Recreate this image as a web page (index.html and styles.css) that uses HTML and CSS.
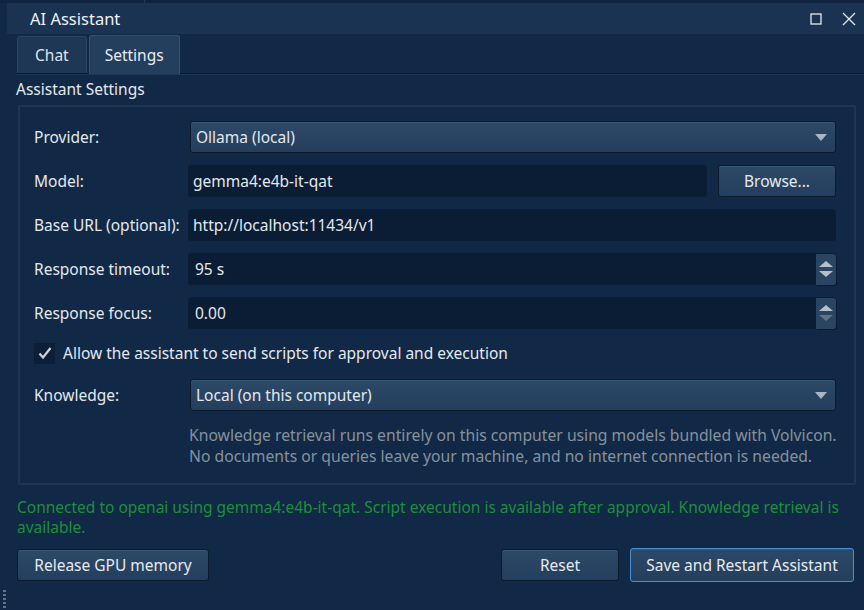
FILE: index.html
```html
<!DOCTYPE html>
<html>
<head>
<meta charset="utf-8">
<link rel="stylesheet" href="styles.css">
</head>
<body>
<div class="app">
  <div class="topstrip"><span class="divider"></span></div>
  <div class="titlebar">
    <span class="title">AI Assistant</span>
    <span class="winbtns">
      <svg class="maxicon" width="12" height="12" viewBox="0 0 12 12"><rect x="1" y="1" width="10" height="10" fill="none" stroke="#e6e9ee" stroke-width="1.3"/></svg>
      <svg class="closeicon" width="14" height="14" viewBox="0 0 14 14"><path d="M1 1 L13 13 M13 1 L1 13" stroke="#e6e9ee" stroke-width="1.3"/></svg>
    </span>
  </div>
  <div class="tabbar">
    <div class="tab">Chat</div>
    <div class="tab active">Settings</div>
  </div>
  <div class="section-title">Assistant Settings</div>
  <div class="group">
    <div class="row">
      <label class="lbl">Provider:</label>
      <div class="combo"><span>Ollama (local)</span><span class="arrow"></span></div>
    </div>
    <div class="row">
      <label class="lbl">Model:</label>
      <div class="field-with-btn">
        <div class="input grow">gemma4:e4b-it-qat</div>
        <div class="btn browse">Browse...</div>
      </div>
    </div>
    <div class="row">
      <label class="lbl">Base URL (optional):</label>
      <div class="input">http://localhost:11434/v1</div>
    </div>
    <div class="row">
      <label class="lbl">Response timeout:</label>
      <div class="spin"><span class="spintext">95 s</span><span class="spinbtns"><span class="up"></span><span class="down"></span></span></div>
    </div>
    <div class="row">
      <label class="lbl">Response focus:</label>
      <div class="spin"><span class="spintext">0.00</span><span class="spinbtns"><span class="up"></span><span class="down dim"></span></span></div>
    </div>
    <div class="checkrow">
      <span class="checkbox"><svg width="16" height="14" viewBox="0 0 16 14"><path d="M2.5 7.5 L6 11.5 L13.5 2" fill="none" stroke="#c9cfd7" stroke-width="2.3"/></svg></span>
      <span>Allow the assistant to send scripts for approval and execution</span>
    </div>
    <div class="row">
      <label class="lbl">Knowledge:</label>
      <div class="combo"><span>Local (on this computer)</span><span class="arrow"></span></div>
    </div>
    <div class="help">Knowledge retrieval runs entirely on this computer using models bundled with Volvicon.<br>No documents or queries leave your machine, and no internet connection is needed.</div>
  </div>
  <div class="status">Connected to openai using gemma4:e4b-it-qat. Script execution is available after approval. Knowledge retrieval is available.</div>
  <div class="actions">
    <div class="btn release">Release GPU memory</div>
    <div class="spacer"></div>
    <div class="btn reset">Reset</div>
    <div class="btn primary">Save and Restart Assistant</div>
  </div>
  <div class="grip"></div>
</div>
</body>
</html>
```
FILE: styles.css
```css
* { box-sizing: border-box; }
html, body { margin: 0; padding: 0; }
body {
  width: 864px;
  height: 610px;
  overflow: hidden;
  background: #112946;
  font-family: "Noto Sans", "Open Sans", sans-serif;
  font-size: 15.5px;
  color: #e4e8ee;
}
.app { position: relative; width: 864px; height: 610px; display: flex; flex-direction: column; }
.topstrip { height: 3px; background: #0e2340; position: relative; flex: none; }
.divider { position: absolute; left: 144px; top: 0; width: 1px; height: 3px; background: #21395a; }
.titlebar {
  flex: none;
  height: 31px;
  margin-left: 7px;
  background: #1b3352;
  display: flex;
  align-items: center;
  padding-left: 23px;
  padding-right: 8px;
}
.title { font-size: 16.5px; color: #eef1f5; flex: 1; }
.winbtns { display: flex; align-items: center; gap: 20px; }
.tabbar {
  flex: none;
  display: flex;
  align-items: flex-end;
  height: 40px;
  border-bottom: 1px solid #0a1b30;
  box-shadow: 0 1px 0 #1d3756;
  margin-left: 16px;
  padding-left: 1px;
}
.tab {
  height: 37px;
  padding: 0 17px;
  display: flex;
  align-items: center;
  background: #1d3755;
  border: 1px solid #2b4563;
  border-bottom: none;
  border-radius: 3px 3px 0 0;
  margin-right: 2px;
  color: #dfe4ea;
}
.tab.active {
  height: 39px;
  margin-bottom: -1px;
  padding: 0 15px;
  background: #243e5d;
  border-color: #355170;
  color: #e8ecf1;
}
.section-title { flex: none; padding: 4px 0 0 16px; height: 31px; color: #e4e8ee; }
.group {
  flex: none;
  margin: 0 8px 0 18px;
  border: 2px solid #1d3654;
  border-radius: 2px;
  height: 380px;
  padding: 14px 18px 0 14px;
  display: flex;
  flex-direction: column;
}
.row { flex: none; display: flex; align-items: center; height: 32px; margin-bottom: 12px; }
.lbl { width: 154px; flex: none; color: #e4e8ee; }
.combo {
  flex: 1;
  height: 32px;
  margin-left: 2px;
  border: 1px solid #0b1a2d;
  border-radius: 3px;
  background: linear-gradient(#2d4968, #243f5d);
  box-shadow: inset 0 1px 0 #3a5776;
  display: flex;
  align-items: center;
  padding: 0 8px 0 5px;
  justify-content: space-between;
}
.arrow {
  width: 0; height: 0;
  border-left: 6px solid transparent;
  border-right: 6px solid transparent;
  border-top: 7px solid #a9b5c4;
}
.input {
  flex: 1;
  height: 32px;
  background: #0b1d35;
  border-radius: 3px;
  display: flex;
  align-items: center;
  padding-left: 5px;
}
.field-with-btn { flex: 1; display: flex; gap: 11px; }
.btn {
  flex: none;
  height: 32px;
  border: 1px solid #0b1a2d;
  border-radius: 3px;
  background: linear-gradient(#2d4968, #243f5d);
  box-shadow: inset 0 1px 0 #3a5776;
  display: flex;
  align-items: center;
  justify-content: center;
  padding: 0 17px;
  color: #e6eaef;
  white-space: nowrap;
}
.browse { width: 118px; padding: 0; }
.release { width: 192px; padding: 0; }
.spin {
  flex: 1;
  height: 32px;
  background: #0b1d35;
  border-radius: 3px;
  display: flex;
  align-items: center;
  padding-left: 7px;
}
.spintext { flex: 1; }
.spinbtns {
  width: 20px;
  height: 31px;
  background: #2a4563;
  border-radius: 0 3px 3px 0;
  box-shadow: 1px 1px 0 #0b1a2d;
  display: flex;
  flex-direction: column;
  align-items: center;
  justify-content: center;
  gap: 4px;
}
.up { width: 0; height: 0; border-left: 7px solid transparent; border-right: 7px solid transparent; border-bottom: 6px solid #b6c0cc; }
.down { width: 0; height: 0; border-left: 7px solid transparent; border-right: 7px solid transparent; border-top: 6px solid #b6c0cc; }
.down.dim { border-top-color: #5f7389; }
.checkrow { flex: none; display: flex; align-items: center; height: 30px; margin: -3px 0 11px 0; gap: 8px; }
.checkbox {
  width: 21px; height: 21px;
  background: #0d1f38;
  display: flex; align-items: center; justify-content: center;
}
.help { flex: none; margin-left: 155px; margin-top: 2px; color: #87919d; line-height: 21px; font-size: 15.7px; white-space: nowrap; }
.status { flex: none; color: #1f8d3d; padding: 12px 16px 0 17px; line-height: 20px; height: 63px; }
.actions { flex: none; display: flex; align-items: center; padding: 0 10px 0 17px; gap: 11px; }
.spacer { flex: 1; }
.reset { width: 118px; }
.primary { border: 1px solid #4a8fd6; height: 34px; width: 224px; padding: 0; }
.grip {
  position: absolute; left: 3px; top: 590px; width: 3px; height: 20px;
  background: repeating-linear-gradient(#5f7389 0 2px, transparent 2px 4px);
}
```
